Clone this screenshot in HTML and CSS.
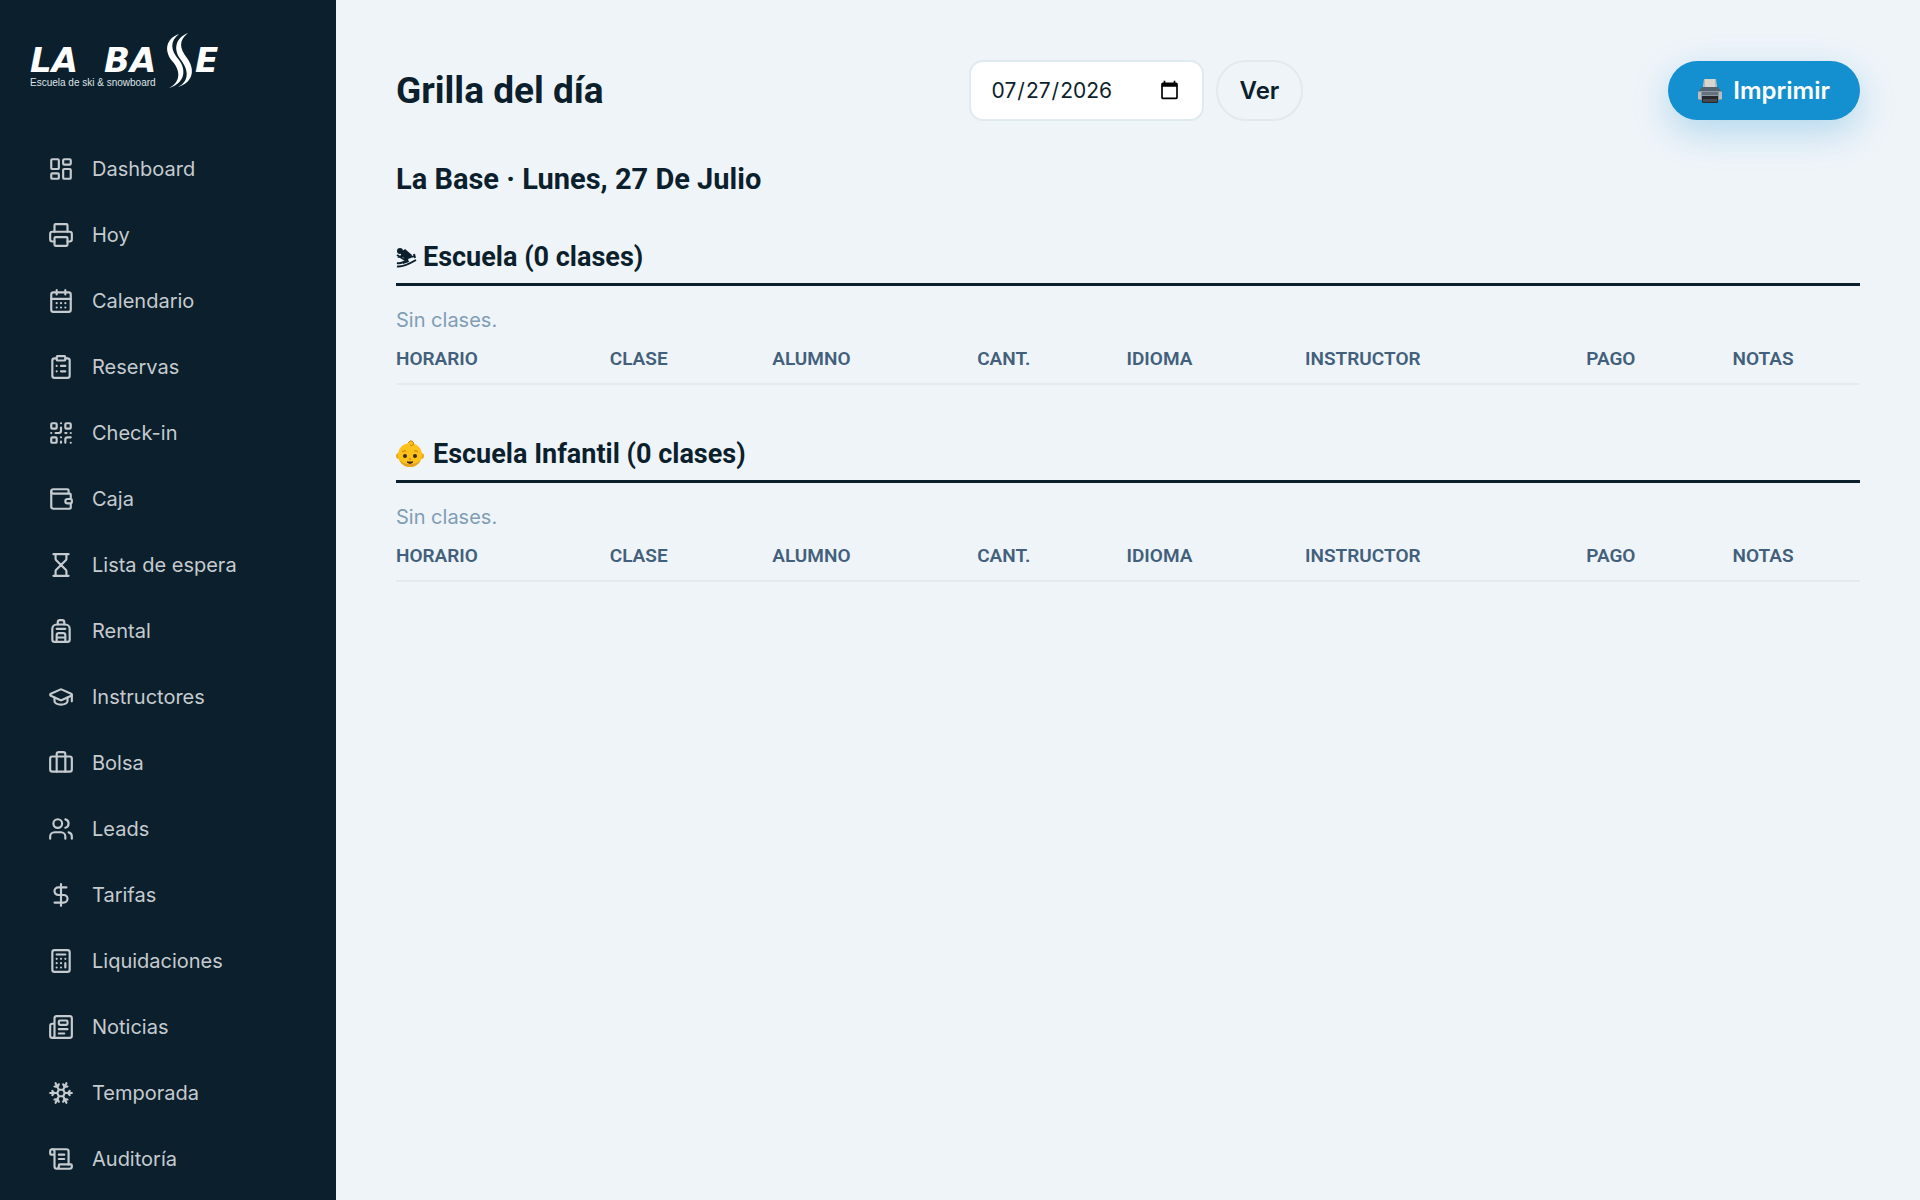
FILE: index.html
```
<!DOCTYPE html>
<html lang="es">
<head>
    <meta charset="UTF-8">
    <meta name="viewport" content="width=device-width, initial-scale=1.0">
    <title>Grilla del día</title>
    <link rel="stylesheet" href="styles.css">
</head>
<body>

    <aside class="sidebar">
        <a href="#" class="logo" aria-label="La Base">
            <svg width="198" height="58" viewBox="0 0 198 58">
                <text class="logo-name" x="0" y="39">LA</text>
                <text class="logo-name" x="74" y="39">BA</text>
                <text class="logo-name" x="165" y="39">E</text>
                <text class="logo-sub" x="0" y="53">Escuela de ski &amp; snowboard</text>
                <path d="M149 1C135 6 134 19 143 29C152 40 149 50 139 55C156 50 156 36 149 27C140 17 140 8 149 1Z"/>
                <path d="M158 0C145 5 143 17 151 27C160 39 158 49 148 54C164 49 165 36 157 25C149 15 149 7 158 0Z"/>
            </svg>
        </a>

        <nav class="menu">
            <a href="#"><svg viewBox="0 0 24 24"><rect width="7" height="9" x="3" y="3" rx="1"/><rect width="7" height="5" x="14" y="3" rx="1"/><rect width="7" height="9" x="14" y="12" rx="1"/><rect width="7" height="5" x="3" y="16" rx="1"/></svg>Dashboard</a>
            <a href="#"><svg viewBox="0 0 24 24"><path d="M6 18H4a2 2 0 0 1-2-2v-5a2 2 0 0 1 2-2h16a2 2 0 0 1 2 2v5a2 2 0 0 1-2 2h-2"/><path d="M6 9V3a1 1 0 0 1 1-1h10a1 1 0 0 1 1 1v6"/><rect x="6" y="14" width="12" height="8" rx="1"/></svg>Hoy</a>
            <a href="#"><svg viewBox="0 0 24 24"><path d="M8 2v4M16 2v4"/><rect width="18" height="18" x="3" y="4" rx="2"/><path d="M3 10h18M8 14h.01M12 14h.01M16 14h.01M8 18h.01M12 18h.01M16 18h.01"/></svg>Calendario</a>
            <a href="#"><svg viewBox="0 0 24 24"><rect width="8" height="4" x="8" y="2" rx="1"/><path d="M16 4h2a2 2 0 0 1 2 2v14a2 2 0 0 1-2 2H6a2 2 0 0 1-2-2V6a2 2 0 0 1 2-2h2M12 11h4M12 16h4M8 11h.01M8 16h.01"/></svg>Reservas</a>
            <a href="#"><svg viewBox="0 0 24 24"><rect width="5" height="5" x="3" y="3" rx="1"/><rect width="5" height="5" x="16" y="3" rx="1"/><rect width="5" height="5" x="3" y="16" rx="1"/><path d="M21 16h-3a2 2 0 0 0-2 2v3M21 21v.01M12 7v3a2 2 0 0 1-2 2H7M3 12h.01M12 3h.01M12 16v.01M16 12h1M21 12v.01M12 21v-1"/></svg>Check-in</a>
            <a href="#"><svg viewBox="0 0 24 24"><path d="M19 7V4a1 1 0 0 0-1-1H5a2 2 0 0 0 0 4h15a1 1 0 0 1 1 1v4h-3a2 2 0 0 0 0 4h3a1 1 0 0 0 1-1v-2a1 1 0 0 0-1-1"/><path d="M3 5v14a2 2 0 0 0 2 2h15a1 1 0 0 0 1-1v-4"/></svg>Caja</a>
            <a href="#"><svg viewBox="0 0 24 24"><path d="M5 22h14M5 2h14M17 22v-4.172a2 2 0 0 0-.586-1.414L12 12l-4.414 4.414A2 2 0 0 0 7 17.828V22"/><path d="M7 2v4.172a2 2 0 0 0 .586 1.414L12 12l4.414-4.414A2 2 0 0 0 17 6.172V2"/></svg>Lista de espera</a>
            <a href="#"><svg viewBox="0 0 24 24"><path d="M4 10a4 4 0 0 1 4-4h8a4 4 0 0 1 4 4v10a2 2 0 0 1-2 2H6a2 2 0 0 1-2-2z"/><path d="M8 10h8M8 18h8M8 22v-6a2 2 0 0 1 2-2h4a2 2 0 0 1 2 2v6M9 6V4a2 2 0 0 1 2-2h2a2 2 0 0 1 2 2v2"/></svg>Rental</a>
            <a href="#"><svg viewBox="0 0 24 24"><path d="M21.42 10.922a1 1 0 0 0-.019-1.838L12.83 5.18a2 2 0 0 0-1.66 0L2.6 9.08a1 1 0 0 0 0 1.832l8.57 3.908a2 2 0 0 0 1.66 0z"/><path d="M22 10v6M6 12.5V16a6 3 0 0 0 12 0v-3.5"/></svg>Instructores</a>
            <a href="#"><svg viewBox="0 0 24 24"><path d="M16 20V4a2 2 0 0 0-2-2h-4a2 2 0 0 0-2 2v16"/><rect width="20" height="14" x="2" y="6" rx="2"/></svg>Bolsa</a>
            <a href="#"><svg viewBox="0 0 24 24"><path d="M16 21v-2a4 4 0 0 0-4-4H6a4 4 0 0 0-4 4v2M16 3.128a4 4 0 0 1 0 7.744M22 21v-2a4 4 0 0 0-3-3.87"/><circle cx="9" cy="7" r="4"/></svg>Leads</a>
            <a href="#"><svg viewBox="0 0 24 24"><path d="M12 2v20M17 5H9.5a3.5 3.5 0 0 0 0 7h5a3.5 3.5 0 0 1 0 7H6"/></svg>Tarifas</a>
            <a href="#"><svg viewBox="0 0 24 24"><rect width="16" height="20" x="4" y="2" rx="2"/><path d="M8 6h8M16 14v4M16 10h.01M12 10h.01M8 10h.01M12 14h.01M8 14h.01M12 18h.01M8 18h.01"/></svg>Liquidaciones</a>
            <a href="#"><svg viewBox="0 0 24 24"><path d="M15 18h-5M18 14h-8M4 22h16a2 2 0 0 0 2-2V4a2 2 0 0 0-2-2H8a2 2 0 0 0-2 2v16a2 2 0 0 1-4 0v-9a2 2 0 0 1 2-2h2"/><rect width="8" height="4" x="10" y="6" rx="1"/></svg>Noticias</a>
            <a href="#"><svg viewBox="0 0 24 24"><path d="m10 20-1.25-2.5L6 18M10 4 8.75 6.5 6 6M14 20l1.25-2.5L18 18M14 4l1.25 2.5L18 6M17 21l-3-6h-4M17 3l-3 6 1.5 3M2 12h6.5L10 9M20 10l-1.5 2 1.5 2M22 12h-6.5L14 15M4 10l1.5 2L4 14M7 21l3-6-1.5-3M7 3l3 6h4"/></svg>Temporada</a>
            <a href="#"><svg viewBox="0 0 24 24"><path d="M15 12h-5M15 8h-5M19 17V5a2 2 0 0 0-2-2H4"/><path d="M8 21h12a2 2 0 0 0 2-2v-1a1 1 0 0 0-1-1H11a1 1 0 0 0-1 1v1a2 2 0 1 1-4 0V5a2 2 0 1 0-4 0v2a1 1 0 0 0 1 1h3"/></svg>Auditoría</a>
        </nav>
    </aside>

    <main class="content">
        <header class="toolbar">
            <h1>Grilla del día</h1>
            <form class="date-form">
                <input type="date" name="fecha" value="2026-07-27" aria-label="Fecha">
                <button type="submit" class="btn btn-ghost">Ver</button>
            </form>
            <button type="button" class="btn btn-primary">
                <svg class="print-icon" width="24" height="24" viewBox="0 0 24 24">
                    <path fill="#d8d5cf" d="M6 0h12l1 9H5z"/>
                    <path fill="#b9b7b2" d="M6 0h1v8H6zM17 0h1v8h-1z"/>
                    <path fill="#53626f" d="M4 8h16l3 4v2H1v-2z"/>
                    <rect fill="#8b98a2" y="12" width="24" height="9" rx="1"/>
                    <path fill="#b4bdc3" d="M0 13h3v7H0zM21 13h3v7h-3z"/>
                    <path fill="#65727d" d="M4 13h16v3H4z"/>
                    <path fill="#25282c" d="M4 17h16v6q0 1-1 1H5q-1 0-1-1z"/>
                    <path fill="#45484c" d="M5 20h14v3H5z"/>
                </svg>
                Imprimir
            </button>
        </header>

        <h2>La Base · Lunes, 27 De Julio</h2>

        <section class="group">
            <h3>
                <svg class="ski-icon" width="21" height="21" viewBox="0 0 21 21">
                    <circle cx="4" cy="4" r="3"/>
                    <path d="M5 5l4-3 7 6-1 3-3 1 1 3-6 2-1-2 3-2-2-3-6 1 4-3z"/>
                    <path class="ski-line" d="M1 8l8 5M18 7l1 4M13 10l6-1M1 19.500q6 1 19-6.500M1 16q3 1 6-1"/>
                </svg>
                <span>Escuela (0 clases)</span>
            </h3>
            <p class="empty">Sin clases.</p>
            <table class="grid">
                <thead>
                    <tr>
                        <th class="col-horario">Horario</th>
                        <th class="col-clase">Clase</th>
                        <th class="col-alumno">Alumno</th>
                        <th class="col-cant">Cant.</th>
                        <th class="col-idioma">Idioma</th>
                        <th class="col-instructor">Instructor</th>
                        <th class="col-pago">Pago</th>
                        <th class="col-notas">Notas</th>
                    </tr>
                </thead>
            </table>
        </section>

        <section class="group">
            <h3 class="kids">
                <svg width="28" height="28" viewBox="0 0 28 28">
                    <circle cx="3" cy="16" r="3" fill="#f0a51c"/>
                    <circle cx="25" cy="16" r="3" fill="#f0a51c"/>
                    <circle cx="14" cy="15" r="12" fill="#fcc21b"/>
                    <path d="M3 19q3 8 11 8t11-8q-3 5-11 5T3 19z" fill="#e8a020"/>
                    <path d="M12 3q2-3 4-2 3 2 1 4-2 1-3 0" fill="#fcc21b" stroke="#cf8613" stroke-width="1"/>
                    <circle cx="9" cy="16" r="2" fill="#3b2a1c"/>
                    <circle cx="19" cy="16" r="2" fill="#3b2a1c"/>
                    <path d="M6 12q2-2 4-1M18 11q2-1 4 1M13 19h2" fill="none" stroke="#c57d14"/>
                    <path d="M11 22h6q-3 3-6 0z" fill="#3b2a1c" stroke="#3b2a1c"/>
                </svg>
                <span>Escuela Infantil (0 clases)</span>
            </h3>
            <p class="empty">Sin clases.</p>
            <table class="grid">
                <thead>
                    <tr>
                        <th class="col-horario">Horario</th>
                        <th class="col-clase">Clase</th>
                        <th class="col-alumno">Alumno</th>
                        <th class="col-cant">Cant.</th>
                        <th class="col-idioma">Idioma</th>
                        <th class="col-instructor">Instructor</th>
                        <th class="col-pago">Pago</th>
                        <th class="col-notas">Notas</th>
                    </tr>
                </thead>
            </table>
        </section>
    </main>

</body>
</html>
```
FILE: styles.css
```
* {
    box-sizing: border-box;
}

body {
    margin: 0;
    display: flex;
    height: 100vh;
    overflow: hidden;
    font-family: Inter, sans-serif;
    font-size: 20px;
    color: #0b1f2c;
    background: #eff4f9;
}

h1, h2, h3, p {
    margin: 0;
}

/* Sidebar */
.sidebar {
    flex: 0 0 336px;
    background: #0b1f2c;
    overflow: hidden;
}

.logo {
    display: block;
    height: 136px;
    padding: 33px 30px;
}

.logo svg {
    display: block;
    fill: #fff;
}

.logo-name {
    font: italic bold 34px "DejaVu Sans", sans-serif;
}

.logo-sub {
    font: 10px "Liberation Sans", sans-serif;
    fill: #dfe4e7;
}

.menu a {
    display: flex;
    align-items: center;
    gap: 18px;
    height: 66px;
    padding: 0 48px;
    color: #c6cbcf;
    text-decoration: none;
}

.menu svg {
    width: 26px;
    height: 26px;
    fill: none;
    stroke: currentColor;
    stroke-width: 2;
    stroke-linecap: round;
    stroke-linejoin: round;
}

/* Contenido */
.content {
    flex: 1;
    padding: 60px;
}

.toolbar {
    display: flex;
    align-items: center;
    justify-content: space-between;
    margin-bottom: 40px;
}

h1, h2, h3 {
    font-family: Roboto, sans-serif;
    font-weight: 700;
}

h1 {
    font-size: 37px;
    line-height: 44px;
}

h2 {
    font-size: 29px;
    line-height: 36px;
    margin-bottom: 44px;
}

h3 {
    display: flex;
    align-items: center;
    gap: 6px;
    font-size: 27px;
    line-height: 32px;
    padding-bottom: 10px;
    border-bottom: 3px solid #0b1f2c;
}

.kids {
    gap: 9px;
}

.ski-icon {
    fill: #0b1f2c;
}

.ski-line {
    fill: none;
    stroke: #0b1f2c;
    stroke-width: 2;
}

.date-form {
    display: flex;
    gap: 12px;
}

.date-form input {
    width: 235px;
    height: 61px;
    padding: 0 20px;
    border: 2px solid #e0eaf1;
    border-radius: 14px;
    background: #fff;
    color: #0b1f2c;
    font: inherit;
    font-size: 21px;
}

.btn {
    display: flex;
    align-items: center;
    gap: 11px;
    height: 59px;
    border: none;
    border-radius: 30px;
    font-family: Inter, sans-serif;
    font-size: 24px;
    font-weight: 600;
    cursor: pointer;
}

.btn-ghost {
    height: 61px;
    padding: 0 22px;
    border: 2px solid #e2e9ef;
    background: transparent;
    color: #0b1f2c;
}

.btn-primary {
    padding: 0 30px;
    background: #148fd0;
    color: #fff;
    box-shadow: 0 12px 36px rgba(20, 143, 208, 0.28);
}

/* Grillas */
.group {
    margin-bottom: 53px;
}

.empty {
    margin-top: 18px;
    line-height: 32px;
    color: #7f9db4;
}

.grid {
    width: 100%;
    table-layout: fixed;
    border-collapse: collapse;
}

.grid th {
    padding: 10px 0 11px;
    border-bottom: 2px solid #e4eaef;
    font-family: Roboto, sans-serif;
    font-size: 19px;
    font-weight: 600;
    line-height: 26px;
    text-align: left;
    text-transform: uppercase;
    color: #42607b;
}

.col-horario { width: 14.6%; }
.col-clase { width: 11.1%; }
.col-alumno { width: 14%; }
.col-cant { width: 10.2%; }
.col-idioma { width: 12.2%; }
.col-instructor { width: 19.2%; }
.col-pago { width: 10%; }
.col-notas { width: 8.7%; }
```
